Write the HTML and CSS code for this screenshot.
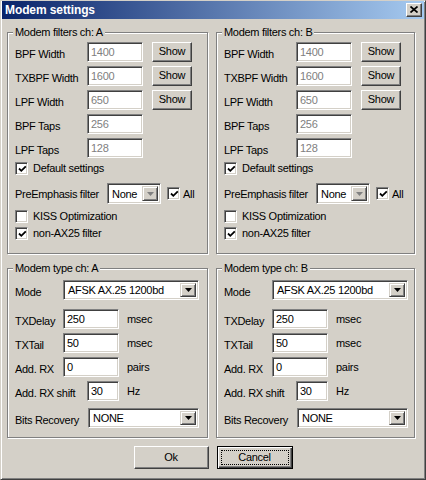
FILE: index.html
```html
<!DOCTYPE html>
<html>
<head>
<meta charset="utf-8">
<link rel="stylesheet" href="styles.css">
</head>
<body>
<div class="window">
  <div class="titlebar">
    <span class="title">Modem settings</span>
    <span class="close"><svg width="8" height="7" viewBox="0 0 8 7"><path d="M0.5 0.5 L7.5 6.5 M7.5 0.5 L0.5 6.5" stroke="#000" stroke-width="1.7" fill="none"/></svg></span>
  </div>
  <div class="content">
    <div class="groups">
      <fieldset class="group">
        <legend>Modem filters ch: A</legend>
        <div class="inner filters">
          <div class="frow"><span class="lbl">BPF Width</span><span class="field dis">1400</span><span class="btn show">Show</span></div>
          <div class="frow"><span class="lbl">TXBPF Width</span><span class="field dis">1600</span><span class="btn show">Show</span></div>
          <div class="frow"><span class="lbl">LPF Width</span><span class="field dis">650</span><span class="btn show">Show</span></div>
          <div class="frow"><span class="lbl">BPF Taps</span><span class="field dis">256</span></div>
          <div class="frow"><span class="lbl">LPF Taps</span><span class="field dis">128</span></div>
          <div class="chk c-default"><span class="box"><svg width="9" height="9" viewBox="0 0 9 9"><path d="M1 3.5 L3.3 5.8 L7.8 1.3" stroke="#000" stroke-width="1.8" fill="none"/></svg></span>Default settings</div>
          <div class="prerow"><span class="lbl prelbl">PreEmphasis filter</span><span class="combo small"><span class="ctext">None</span><span class="arrowbtn"><svg width="7" height="4" viewBox="0 0 7 4"><path d="M0 0 H7 L3.5 4 Z" fill="#808080"/></svg></span></span><span class="box allbox"><svg width="9" height="9" viewBox="0 0 9 9"><path d="M1 3.5 L3.3 5.8 L7.8 1.3" stroke="#000" stroke-width="1.8" fill="none"/></svg></span><span class="alltxt">All</span></div>
          <div class="chk c-kiss"><span class="box"></span>KISS Optimization</div>
          <div class="chk c-ax"><span class="box"><svg width="9" height="9" viewBox="0 0 9 9"><path d="M1 3.5 L3.3 5.8 L7.8 1.3" stroke="#000" stroke-width="1.8" fill="none"/></svg></span>non-AX25 filter</div>
        </div>
      </fieldset>
      <fieldset class="group">
        <legend>Modem filters ch: B</legend>
        <div class="inner filters">
          <div class="frow"><span class="lbl">BPF Width</span><span class="field dis">1400</span><span class="btn show">Show</span></div>
          <div class="frow"><span class="lbl">TXBPF Width</span><span class="field dis">1600</span><span class="btn show">Show</span></div>
          <div class="frow"><span class="lbl">LPF Width</span><span class="field dis">650</span><span class="btn show">Show</span></div>
          <div class="frow"><span class="lbl">BPF Taps</span><span class="field dis">256</span></div>
          <div class="frow"><span class="lbl">LPF Taps</span><span class="field dis">128</span></div>
          <div class="chk c-default"><span class="box"><svg width="9" height="9" viewBox="0 0 9 9"><path d="M1 3.5 L3.3 5.8 L7.8 1.3" stroke="#000" stroke-width="1.8" fill="none"/></svg></span>Default settings</div>
          <div class="prerow"><span class="lbl prelbl">PreEmphasis filter</span><span class="combo small"><span class="ctext">None</span><span class="arrowbtn"><svg width="7" height="4" viewBox="0 0 7 4"><path d="M0 0 H7 L3.5 4 Z" fill="#808080"/></svg></span></span><span class="box allbox"><svg width="9" height="9" viewBox="0 0 9 9"><path d="M1 3.5 L3.3 5.8 L7.8 1.3" stroke="#000" stroke-width="1.8" fill="none"/></svg></span><span class="alltxt">All</span></div>
          <div class="chk c-kiss"><span class="box"></span>KISS Optimization</div>
          <div class="chk c-ax"><span class="box"><svg width="9" height="9" viewBox="0 0 9 9"><path d="M1 3.5 L3.3 5.8 L7.8 1.3" stroke="#000" stroke-width="1.8" fill="none"/></svg></span>non-AX25 filter</div>
        </div>
      </fieldset>
      <fieldset class="group">
        <legend>Modem type ch: A</legend>
        <div class="inner modem">
          <div class="mrow r-mode"><span class="lbl l-mode">Mode</span><span class="combo wide"><span class="ctext">AFSK AX.25 1200bd</span><span class="arrowbtn"><svg width="7" height="4" viewBox="0 0 7 4"><path d="M0 0 H7 L3.5 4 Z" fill="#000"/></svg></span></span></div>
          <div class="mrow r-delay"><span class="lbl l-mode">TXDelay</span><span class="field">250</span><span class="unit">msec</span></div>
          <div class="mrow r-std"><span class="lbl l-mode">TXTail</span><span class="field">50</span><span class="unit">msec</span></div>
          <div class="mrow r-std"><span class="lbl l-mode">Add. RX</span><span class="field">0</span><span class="unit">pairs</span></div>
          <div class="mrow r-std"><span class="lbl l-shift">Add. RX shift</span><span class="field short">30</span><span class="unit">Hz</span></div>
          <div class="mrow r-bits"><span class="lbl l-bits">Bits Recovery</span><span class="combo bits"><span class="ctext">NONE</span><span class="arrowbtn"><svg width="7" height="4" viewBox="0 0 7 4"><path d="M0 0 H7 L3.5 4 Z" fill="#000"/></svg></span></span></div>
        </div>
      </fieldset>
      <fieldset class="group">
        <legend>Modem type ch: B</legend>
        <div class="inner modem">
          <div class="mrow r-mode"><span class="lbl l-mode">Mode</span><span class="combo wide"><span class="ctext">AFSK AX.25 1200bd</span><span class="arrowbtn"><svg width="7" height="4" viewBox="0 0 7 4"><path d="M0 0 H7 L3.5 4 Z" fill="#000"/></svg></span></span></div>
          <div class="mrow r-delay"><span class="lbl l-mode">TXDelay</span><span class="field">250</span><span class="unit">msec</span></div>
          <div class="mrow r-std"><span class="lbl l-mode">TXTail</span><span class="field">50</span><span class="unit">msec</span></div>
          <div class="mrow r-std"><span class="lbl l-mode">Add. RX</span><span class="field">0</span><span class="unit">pairs</span></div>
          <div class="mrow r-std"><span class="lbl l-shift">Add. RX shift</span><span class="field short">30</span><span class="unit">Hz</span></div>
          <div class="mrow r-bits"><span class="lbl l-bits">Bits Recovery</span><span class="combo bits"><span class="ctext">NONE</span><span class="arrowbtn"><svg width="7" height="4" viewBox="0 0 7 4"><path d="M0 0 H7 L3.5 4 Z" fill="#000"/></svg></span></span></div>
        </div>
      </fieldset>
    </div>
    <div class="buttons">
      <span class="btn big">Ok</span>
      <span class="btn big default"><span class="focus">Cancel</span></span>
    </div>
  </div>
</div>
</body>
</html>
```
FILE: styles.css
```css
* { box-sizing: border-box; }
html, body { margin: 0; padding: 0; }
body {
  width: 426px;
  height: 480px;
  overflow: hidden;
  background: #d4d0c8;
  font-family: "Liberation Sans", Arial, sans-serif;
  font-size: 11px;
  line-height: 13px;
  letter-spacing: -0.3px;
  color: #000;
}
.window {
  width: 426px;
  height: 480px;
  background: #d4d0c8;
  border: 1px solid;
  border-color: #d4d0c8 #404040 #404040 #d4d0c8;
  box-shadow: inset 1px 1px #fff, inset -1px -1px #808080;
  display: flex;
  flex-direction: column;
}
.titlebar {
  height: 18px;
  margin: 0 1px;
  padding: 0 2px 0 3px;
  background: linear-gradient(to right, #0a246a, #a6caf0);
  display: flex;
  align-items: center;
  justify-content: space-between;
}
.title {
  color: #fff;
  font-weight: bold;
  font-size: 12px;
  line-height: 14px;
  letter-spacing: -0.1px;
}
.close {
  width: 16px;
  height: 14px;
  background: #d4d0c8;
  border: 1px solid;
  border-color: #fff #404040 #404040 #fff;
  box-shadow: inset -1px -1px #808080;
  display: flex;
  align-items: center;
  justify-content: center;
  padding-bottom: 1px;
  padding-right: 1px;
}
.close svg { display: block; }
.content {
  padding: 7px 0 0 6px;
}
.groups {
  display: grid;
  grid-template-columns: 201px 199px;
  grid-template-rows: 228px 176px;
  column-gap: 8px;
  row-gap: 8px;
}
.group {
  margin: 0;
  padding: 0;
  min-width: 0;
  border: 1px solid #808080;
  box-shadow: 1px 1px #fff, inset 1px 1px #fff;
}
.group legend {
  margin-left: 5px;
  padding: 0 2px;
  line-height: 13px;
  background: #d4d0c8;
}
.inner { padding-left: 7px; }
.filters { padding-top: 3px; }
.frow {
  display: flex;
  align-items: center;
  height: 20px;
  margin-bottom: 4px;
}
.lbl { width: 72px; flex: none; white-space: nowrap; padding-top: 5px; }
.field {
  width: 56px;
  height: 20px;
  flex: none;
  background: #fff;
  border: 1px solid;
  border-color: #808080 #fff #fff #808080;
  box-shadow: inset 1px 1px #404040, inset -1px -1px #d4d0c8;
  padding: 3px 0 0 3px;
  white-space: nowrap;
}
.field.dis { color: #808080; }
.field.short { width: 32px; }
.btn {
  display: flex;
  align-items: center;
  justify-content: center;
  background: #d4d0c8;
  border: 1px solid;
  border-color: #fff #404040 #404040 #fff;
  box-shadow: inset -1px -1px #808080;
}
.show {
  width: 40px;
  height: 20px;
  margin-left: 9px;
  padding-bottom: 1px;
}
.chk {
  display: flex;
  align-items: center;
  height: 13px;
}
.box {
  width: 13px;
  height: 13px;
  flex: none;
  background: #fff;
  border: 1px solid;
  border-color: #808080 #fff #fff #808080;
  box-shadow: inset 1px 1px #404040, inset -1px -1px #d4d0c8;
  display: flex;
  align-items: center;
  justify-content: center;
  margin-right: 5px;
}
.box svg { display: block; margin: 1px 0 0 1px; }
.c-default { margin-top: 2px; }
.prerow {
  display: flex;
  align-items: center;
  height: 21px;
  margin-top: 8px;
}
.prelbl { width: 92px; padding-top: 2px; }
.alltxt { padding-top: 2px; }
.combo {
  height: 20px;
  flex: none;
  background: #fff;
  border: 1px solid;
  border-color: #808080 #fff #fff #808080;
  box-shadow: inset 1px 1px #404040, inset -1px -1px #d4d0c8;
  display: flex;
  align-items: stretch;
  padding: 2px;
}
.combo .ctext {
  flex: 1;
  padding: 1px 0 0 2px;
  white-space: nowrap;
  overflow: hidden;
}
.arrowbtn {
  width: 16px;
  flex: none;
  background: #d4d0c8;
  border: 1px solid;
  border-color: #d4d0c8 #404040 #404040 #d4d0c8;
  box-shadow: inset 1px 1px #fff, inset -1px -1px #808080;
  display: flex;
  align-items: center;
  justify-content: center;
}
.arrowbtn svg { display: block; }
.combo.small { width: 54px; height: 21px; margin-right: 6px; }
.combo.small .ctext { padding-top: 2px; }
.allbox { margin-right: 3px; }
.c-kiss { margin-top: 6px; }
.c-ax { margin-top: 4px; }
.modem { padding-top: 5px; }
.mrow {
  display: flex;
  align-items: center;
  height: 20px;
}
.l-mode { width: 48px; }
.l-shift { width: 72px; }
.l-bits { width: 73px; }
.combo.wide { width: 136px; }
.combo.bits { width: 111px; }
.r-delay { margin-top: 9px; }
.r-std { margin-top: 4px; }
.r-bits { margin-top: 7px; }
.unit { margin-left: 8px; padding-top: 1px; }
.buttons {
  display: flex;
  justify-content: center;
  gap: 8px;
  margin-top: 8px;
  padding-right: 6px;
}
.big {
  width: 75px;
  height: 23px;
}
.btn.default {
  width: 76px;
  border: 1px solid #000;
  box-shadow: inset 1px 1px #fff, inset -1px -1px #404040, inset -2px -2px #808080;
  padding: 3px;
}
.focus {
  flex: 1;
  align-self: stretch;
  border: 1px dotted #000;
  display: flex;
  align-items: center;
  justify-content: center;
}
```
